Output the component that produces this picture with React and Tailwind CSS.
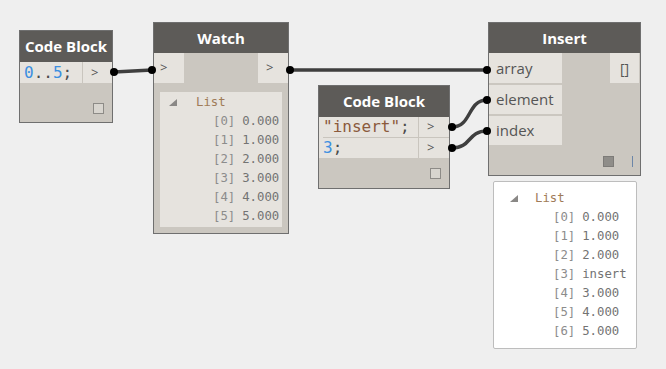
import React from 'react'

const MONO = { fontFamily: '"DejaVu Sans Mono", "Liberation Mono", monospace' }
const SANS = { fontFamily: '"Open Sans", "Noto Sans", sans-serif' }

function Tri() {
  return (
    <svg width="8" height="8" viewBox="0 0 8 8" className="shrink-0">
      <polygon points="8,0 8,7 0,7" fill="#8a8886" />
    </svg>
  )
}

function TreeList({ rows, triLeft, listGap, indent }) {
  return (
    <div className="text-[12.3px] leading-[19px]" style={MONO}>
      <div className="flex items-center" style={{ paddingLeft: triLeft }}>
        <Tri />
        <span className="text-[#a07b58]" style={{ marginLeft: listGap }}>List</span>
      </div>
      {rows.map((r, i) => (
        <div key={i} className="flex" style={{ paddingLeft: indent }}>
          <span className="text-[#8c8c8c]">[{i}]</span>
          <span className="text-[#737373] ml-[7px]">{r}</span>
        </div>
      ))}
    </div>
  )
}

function Port({ children, className = '' }) {
  return (
    <div className={`bg-[#e6e3de] text-[#555] flex items-center ${className}`} style={SANS}>
      {children}
    </div>
  )
}

export default function App() {
  return (
    <div className="relative w-[666px] h-[369px] bg-[#efefef] overflow-hidden">
      {/* Code Block 1 */}
      <div className="absolute left-[19px] top-[30px] w-[94px] h-[93px] border border-[#6f6f6f] bg-[#cbc7c0] flex flex-col">
        <div className="h-[31px] bg-[#5d5b58] text-white font-bold text-[15px] flex items-center justify-center" style={SANS}>Code Block</div>
        <div className="h-[21px] flex bg-[#e6e3de]">
          <div className="flex-1 flex items-center pl-[4px] text-[16px]" style={MONO}>
            <span className="text-[#3d8fe0]">0</span>
            <span className="text-[#4a4a4a]">..</span>
            <span className="text-[#3d8fe0]">5</span>
            <span className="text-[#4a4a4a]">;</span>
          </div>
          <div className="w-[30px] border-l border-[#c9c5be] flex items-center pl-[8px] text-[#555] text-[13px]" style={SANS}>&gt;</div>
        </div>
        <div className="flex-1 flex items-end justify-end pr-[8px] pb-[8px]">
          <div className="w-[11px] h-[11px] border border-[#8d8b87] bg-[#d8d5cf]" />
        </div>
      </div>

      {/* Watch */}
      <div className="absolute left-[153px] top-[22px] w-[136px] h-[212px] border border-[#6f6f6f] bg-[#cbc7c0] flex flex-col">
        <div className="h-[30px] bg-[#5d5b58] text-white font-bold text-[15px] flex items-center justify-center" style={SANS}>Watch</div>
        <div className="h-[30px] flex justify-between">
          <Port className="w-[30px] pl-[6px] text-[13px]">&gt;</Port>
          <Port className="w-[30px] pl-[8px] text-[13px]">&gt;</Port>
        </div>
        <div className="mt-[9px] mx-[6px] h-[135px] bg-[#e6e3de] pt-[1px]">
          <TreeList
            rows={['0.000', '1.000', '2.000', '3.000', '4.000', '5.000']}
            triLeft={9}
            listGap={19}
            indent={53}
          />
        </div>
      </div>

      {/* Code Block 2 */}
      <div className="absolute left-[318px] top-[85px] w-[132px] h-[104px] border border-[#6f6f6f] bg-[#cbc7c0] flex flex-col">
        <div className="h-[31px] bg-[#5d5b58] text-white font-bold text-[15px] flex items-center justify-center" style={SANS}>Code Block</div>
        <div className="flex bg-[#e6e3de]">
          <div className="w-[99px] text-[16px] leading-[20px] pl-[4px]" style={MONO}>
            <div className="h-[21px] border-b border-[#c9c5be]">
              <span className="text-[#8b5a3c]">"insert"</span>
              <span className="text-[#4a4a4a]">;</span>
            </div>
            <div className="h-[20px]">
              <span className="text-[#3d8fe0]">3</span>
              <span className="text-[#4a4a4a]">;</span>
            </div>
          </div>
          <div className="flex-1 border-l border-[#c9c5be] text-[#555] text-[13px]" style={SANS}>
            <div className="h-[21px] border-b border-[#c9c5be] flex items-center pl-[8px]">&gt;</div>
            <div className="h-[20px] flex items-center pl-[8px]">&gt;</div>
          </div>
        </div>
        <div className="flex-1 flex items-end justify-end pr-[8px] pb-[9px]">
          <div className="w-[11px] h-[11px] border border-[#8d8b87] bg-[#d8d5cf]" />
        </div>
      </div>

      {/* Insert */}
      <div className="absolute left-[488px] top-[22px] w-[153px] h-[154px] border border-[#6f6f6f] bg-[#cbc7c0] flex flex-col">
        <div className="h-[30px] bg-[#5d5b58] text-white font-bold text-[15px] flex items-center justify-center" style={SANS}>Insert</div>
        <div className="flex justify-between">
          <div className="w-[73px] flex flex-col gap-[2px] text-[15px]">
            <Port className="h-[30px] pl-[7px]">array</Port>
            <Port className="h-[29px] pl-[7px]">element</Port>
            <Port className="h-[29px] pl-[7px]">index</Port>
          </div>
          <Port className="w-[29px] h-[30px] mr-[1px] justify-center text-[14px]">[]</Port>
        </div>
        <div className="flex-1 flex items-end justify-end pb-[8px] pr-[7px] gap-[18px]">
          <div className="w-[11px] h-[11px] border border-[#7d7b78] bg-[#8f8d89]" />
          <div className="w-[1px] h-[11px] bg-[#6c86a8]" />
        </div>
      </div>

      {/* Insert watch bubble */}
      <div className="absolute left-[493px] top-[181px] w-[144px] h-[168px] bg-white border border-[#bdbdbd] rounded-[2px] pt-[7px]">
        <TreeList
          rows={['0.000', '1.000', '2.000', 'insert', '3.000', '4.000', '5.000']}
          triLeft={16}
          listGap={17}
          indent={59}
        />
      </div>

      {/* Wires */}
      <svg className="absolute left-0 top-0" width="666" height="369">
        <g fill="none" stroke="#3f3f3f" strokeWidth="3.5" strokeLinecap="round">
          <path d="M114,72 L152,70" />
          <path d="M290,70 L487,70" />
          <path d="M452,127 C472,127 467,100 487,100" />
          <path d="M452,148 C472,148 467,131 487,131" />
        </g>
        <g fill="#000">
          <circle cx="114" cy="72" r="4" />
          <circle cx="152" cy="70" r="4" />
          <circle cx="290" cy="70" r="4" />
          <circle cx="487" cy="70" r="4" />
          <circle cx="452" cy="127" r="4" />
          <circle cx="452" cy="148" r="4" />
          <circle cx="487" cy="100" r="4" />
          <circle cx="487" cy="131" r="4" />
        </g>
      </svg>
    </div>
  )
}
